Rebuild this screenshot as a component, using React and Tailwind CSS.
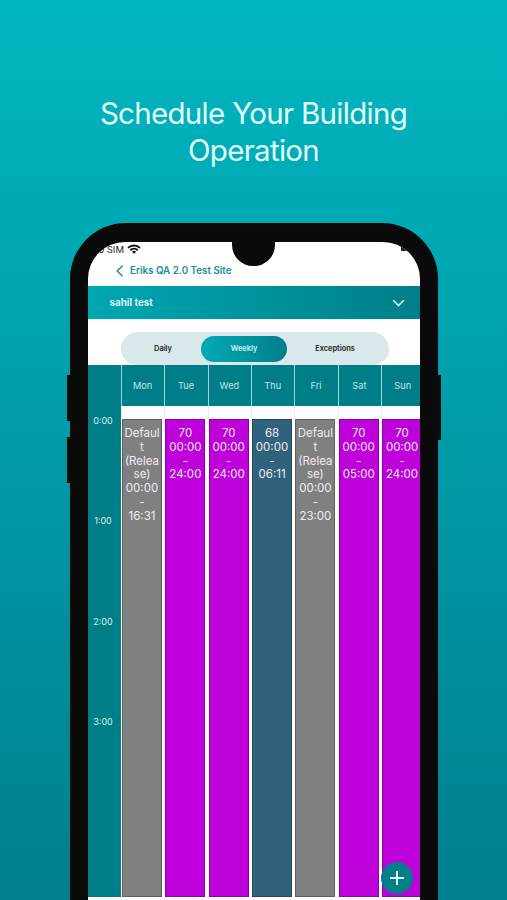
import React from "react";

const DAYS = [
  { day: "Mon", color: "bg-[#808080]", lines: ["Defaul", "t", "(Relea", "se)", "00:00", "-", "16:31"] },
  { day: "Tue", color: "bg-[#be00da]", lines: ["70", "00:00", "-", "24:00"] },
  { day: "Wed", color: "bg-[#be00da]", lines: ["70", "00:00", "-", "24:00"] },
  { day: "Thu", color: "bg-[#2e637b]", lines: ["68", "00:00", "-", "06:11"] },
  { day: "Fri", color: "bg-[#808080]", lines: ["Defaul", "t", "(Relea", "se)", "00:00", "-", "23:00"] },
  { day: "Sat", color: "bg-[#be00da]", lines: ["70", "00:00", "-", "05:00"] },
  { day: "Sun", color: "bg-[#be00da]", lines: ["70", "00:00", "-", "24:00"] },
];

const HOURS = ["0:00", "1:00", "2:00", "3:00"];

function StatusBar() {
  return (
    <div className="flex h-[14px] shrink-0 items-center pl-[8px] text-[#222]">
      <span className="flex w-[28px] justify-end pt-px text-[9.5px] leading-[14px] whitespace-nowrap">No SIM</span>
      <svg className="ml-[3px] h-[10px] w-[14px]" viewBox="0 0 14 10" fill="none" stroke="#111" strokeWidth="1.9">
        <path d="M1 3.9a8.6 8.6 0 0 1 12 0" />
        <path d="M3.3 6.3a5.3 5.3 0 0 1 7.4 0" />
        <path d="M7 9.8 4.9 7.7a3 3 0 0 1 4.2 0Z" fill="#111" stroke="none" />
      </svg>
    </div>
  );
}

function TitleBar() {
  return (
    <div className="flex h-[30px] shrink-0 items-center pl-[28px] text-[#1b8c98]">
      <svg className="h-[12px] w-[8px]" viewBox="0 0 8 12" fill="none" stroke="currentColor" strokeWidth="1.4">
        <path d="M6.5 .7 1.2 6l5.3 5.3" />
      </svg>
      <span className="ml-[6px] pt-px text-[9.8px] font-semibold whitespace-nowrap">Eriks QA 2.0 Test Site</span>
    </div>
  );
}

function Tabs() {
  return (
    <div className="flex h-[46px] shrink-0 border-t border-[#e3fbfc] pt-[12px] pl-[33px]">
      <div className="flex h-[33px] w-[268px] items-center rounded-t-[17px] rounded-b-[16px] bg-[#d9e8ea] text-[7.4px] font-semibold text-[#222]">
        <span className="w-[80px] pl-[4px] text-center">Daily</span>
        <span className="flex h-[26px] w-[86px] items-center justify-center rounded-full bg-linear-to-r from-[#00abb5] to-[#007f8b] text-[#d6f4f4]">Weekly</span>
        <span className="w-[102px] pr-[6px] text-center">Exceptions</span>
      </div>
    </div>
  );
}

function Week() {
  return (
    <div className="flex h-[532px] shrink-0">
      <div className="w-[33px] shrink-0 bg-[#007e88] pt-[48.5px] text-center text-[9px] text-[#d8f0f0]">
        {HOURS.map((h) => (
          <div key={h} className="h-[100.5px] pr-[3px] leading-[13px]">{h}</div>
        ))}
      </div>
      {DAYS.map((d) => (
        <div key={d.day} className="flex w-[43.35px] shrink-0 flex-col">
          <div className="flex h-[41px] shrink-0 items-center justify-center border-l border-[#a9d2d6] bg-[#007e88] pt-px pr-px text-[9.2px] text-[#c5e5e8]">{d.day}</div>
          <div className="h-[13px] shrink-0 border-l border-[#ececec]" />
          <div className={"ml-px w-[40px] grow border border-black/25 pt-[7px] text-center text-[11.5px] leading-[13.75px] text-[#f3eaf5] " + d.color}>
            {d.lines.map((line, i) => (
              <div key={i} className="-mx-1 whitespace-nowrap">{line}</div>
            ))}
          </div>
        </div>
      ))}
    </div>
  );
}

export default function App() {
  return (
    <div className="relative h-[900px] w-[507px] overflow-hidden bg-linear-to-b from-[#00b7c1] to-[#007f8d] font-['Inter','Liberation_Sans',sans-serif]">
      <h1 className="h-[223px] pt-[95px] text-center text-[29.5px] leading-[37px] font-normal tracking-[-0.7px] text-[#e2ffff]">
        Schedule Your Building
        <br />
        Operation
      </h1>

      <div className="absolute top-[375px] left-[67px] h-[46px] w-[6px] bg-[#0a0a0a]" />
      <div className="absolute top-[437px] left-[67px] h-[46px] w-[6px] bg-[#0a0a0a]" />
      <div className="absolute top-[375px] left-[435px] h-[65px] w-[6px] bg-[#0a0a0a]" />

      <div className="relative ml-[70px] h-[750px] w-[368px] rounded-t-[56px] bg-[#0a0a0a] px-[18px] pt-[19px]">
        <div className="relative flex h-full w-full flex-col overflow-hidden rounded-t-[37px] bg-white">
          <StatusBar />
          <TitleBar />
          <div className="flex h-[33px] shrink-0 items-center justify-between bg-linear-to-r from-[#00a7b1] to-[#007f89] pr-[15px] pl-[21.5px] text-[9.8px] font-bold text-[#d9f4f5]">
            <span className="pt-px">sahil test</span>
            <svg className="h-[8px] w-[13px]" viewBox="0 0 13 8" fill="none" stroke="currentColor" strokeWidth="1.6">
              <path d="m1.2 1.2 5.3 5.3 5.3-5.3" />
            </svg>
          </div>
          <Tabs />
          <Week />
          <div className="absolute top-0 left-[144px] h-[24px] w-[43px] rounded-b-[21px] bg-[#0a0a0a]" />
          <div className="absolute top-[5px] right-[14px] h-[4px] w-[5px] bg-[#222]" />
          <div className="absolute top-[620px] left-[292.5px] flex h-[32px] w-[32px] items-center justify-center rounded-full bg-[#007f8b]">
            <svg className="h-[14px] w-[14px]" viewBox="0 0 14 14" stroke="#e8ffff" strokeWidth="2">
              <path d="M7 0v14M0 7h14" />
            </svg>
          </div>
        </div>
      </div>
    </div>
  );
}
